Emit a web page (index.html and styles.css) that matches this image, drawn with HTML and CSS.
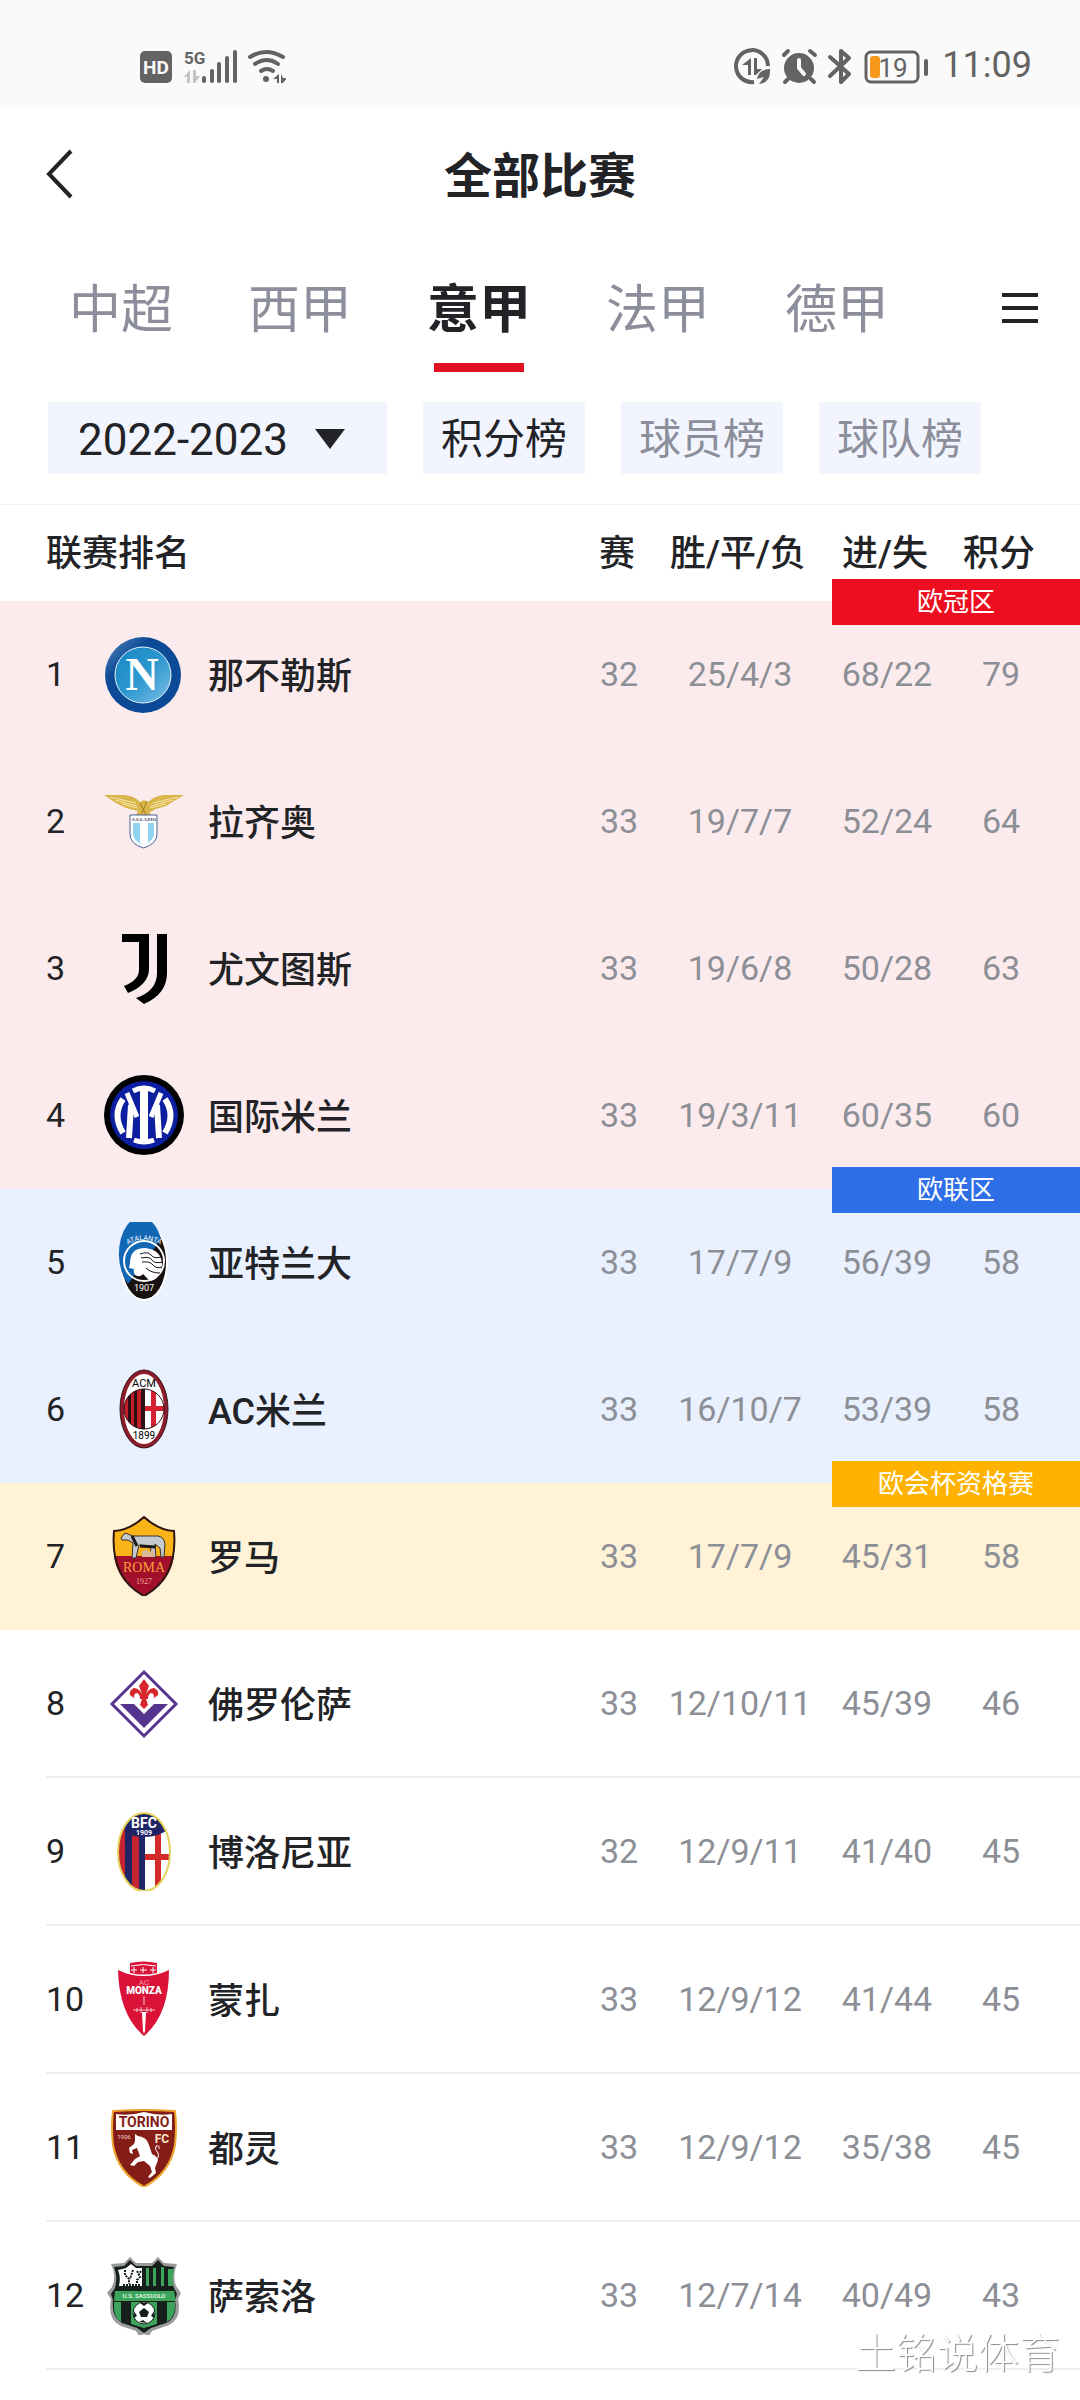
FILE: index.html
```html
<!DOCTYPE html>
<html lang="zh-CN">
<head>
    <meta charset="UTF-8">
    <meta name="viewport" content="width=device-width, initial-scale=1.0">
    <title>全部比赛</title>
    <link rel="stylesheet" href="styles.css">
</head>
<body>

    <!-- 状态栏 -->
    <div class="status">
        <svg class="status-left" width="146" height="40" viewBox="0 0 146 40" fill="#636363">
            <rect x="0" y="6" width="32" height="32" rx="5"/>
            <text x="16" y="29" font-size="19" font-weight="700" fill="#fafafa" text-anchor="middle">HD</text>
            <text x="44" y="19" font-size="17" font-weight="700">5G</text>
            <g fill="#c4c4c4"><path d="M50 25v13h-3V32h-3zM53 25h3v6h4l-5 7h-2z"/></g>
            <rect x="62" y="31" width="4" height="7" rx="2"/>
            <rect x="70" y="24" width="4" height="14" rx="2"/>
            <rect x="77" y="17" width="4" height="21" rx="2"/>
            <rect x="85" y="11" width="4" height="27" rx="2"/>
            <rect x="93" y="5" width="4" height="33" rx="2"/>
            <g fill="none" stroke="#636363" stroke-width="4" stroke-linecap="round">
                <path d="M110 12q16-10 33 0M115 19q12-8 23 0M121 26q6-4 12 0"/>
            </g>
            <circle cx="126" cy="34" r="3"/>
            <path d="M139 29v9h-2v-4h-4zM141 29l2 4h4l-4 5h-2z"/>
        </svg>
        <svg class="status-right" width="196" height="40" viewBox="0 0 196 40" fill="#636363">
            <g fill="none" stroke="#636363" stroke-width="4">
                <path d="M34 21A16 16 0 1 0 20 37"/>
            </g>
            <path d="M17 13v17h-3V20H8zM20 13h3v11h5l-6 6h-2zM23 34q2-10 13-10q1 14-11 15l5-7z"/>
            <circle cx="65" cy="23" r="15"/>
            <g fill="none" stroke="#636363" stroke-width="4" stroke-linecap="round">
                <path d="M50 10l4-4M76 6l5 4M54 34l-3 3M77 34l3 3"/>
            </g>
            <path d="M65 15v8l5 6" fill="none" stroke="#fafafa" stroke-width="4" stroke-linecap="round"/>
            <path d="M96 12l19 17l-8 8V6l8 7l-19 18" fill="none" stroke="#636363" stroke-width="4" stroke-linejoin="round" stroke-linecap="round"/>
            <rect x="132" y="7" width="52" height="30" rx="5" fill="none" stroke="#636363" stroke-width="3"/>
            <rect x="136" y="11" width="10" height="22" rx="3" fill="#f8981d"/>
            <text x="159" y="32" font-size="26" text-anchor="middle">19</text>
            <rect x="190" y="14" width="4" height="17" rx="2"/>
        </svg>
        <time class="clock">11:09</time>
    </div>

    <header class="header">
        <button class="back" type="button" aria-label="返回">
            <svg width="30" height="52" viewBox="0 0 30 52"><path d="M26 3L4 26L26 49" fill="none" stroke="#222326" stroke-width="4"/></svg>
        </button>
        <h1>全部比赛</h1>
    </header>

    <nav class="tabs">
        <a href="#">中超</a>
        <a href="#">西甲</a>
        <a href="#" class="active">意甲</a>
        <a href="#">法甲</a>
        <a href="#">德甲</a>
        <button class="menu" type="button" aria-label="更多联赛">
            <svg width="36" height="30" viewBox="0 0 36 30" fill="#222326"><path d="M0 0h36v4H0zM0 13h36v4H0zM0 26h36v4H0z"/></svg>
        </button>
    </nav>

    <div class="filters">
        <div class="season">
            <select aria-label="赛季">
                <option>2022-2023</option>
            </select>
            <svg class="arrow" width="30" height="20" viewBox="0 0 30 20"><path d="M0 0h30L15 20z" fill="#222326"/></svg>
        </div>
        <button type="button" class="active">积分榜</button>
        <button type="button">球员榜</button>
        <button type="button">球队榜</button>
    </div>

    <table class="standings">
        <colgroup>
            <col class="c-rank">
            <col class="c-logo">
            <col>
            <col class="c-played">
            <col class="c-record">
            <col class="c-goals">
            <col class="c-points">
        </colgroup>
        <thead>
            <tr>
                <th colspan="3" class="rank">联赛排名</th>
                <th>赛</th>
                <th>胜/平/负</th>
                <th>进/失</th>
                <th class="points">积分</th>
            </tr>
        </thead>
        <tbody>
            <!-- 欧冠区 -->
            <tr class="ucl">
                <td class="rank">1</td>
                <td class="logo">
                    <svg viewBox="0 0 80 80">
                        <defs>
                            <linearGradient id="nap" x1="0" y1="0" x2="1" y2="1"><stop offset="0" stop-color="#5a8fc4"/><stop offset=".3" stop-color="#0d4a94"/><stop offset="1" stop-color="#0b4a9a"/></linearGradient>
                            <linearGradient id="nap2" x1="0" y1="0" x2="1" y2="1"><stop offset="0" stop-color="#1787c4"/><stop offset=".5" stop-color="#2d97cf"/><stop offset="1" stop-color="#7fc0e6"/></linearGradient>
                        </defs>
                        <circle cx="39" cy="41" r="38" fill="url(#nap)"/>
                        <circle cx="39" cy="41" r="28" fill="url(#nap2)" stroke="#e6f4fb"/>
                        <text x="38" y="56" class="serif" font-size="46" font-weight="700" fill="#fff" text-anchor="middle">N</text>
                    </svg>
                </td>
                <td class="team">那不勒斯</td>
                <td>32</td>
                <td>25/4/3</td>
                <td>68/22</td>
                <td class="points"><span class="zone">欧冠区</span>79</td>
            </tr>
            <tr class="ucl">
                <td class="rank">2</td>
                <td class="logo">
                    <svg viewBox="0 0 80 80">
                        <path d="M0 14L20 14Q31 15 36 21L40 19L44 21Q50 15 60 14L80 14L70 20L62 25L52 28L46 31L47 35H32L34 30L22 27L12 22z" fill="#d9b64c"/>
                        <path d="M6 16l26 6M11 19l22 6M18 23l16 4M74 16l-25 6M69 19l-22 6M62 23l-16 4" stroke="#f7e7a8" fill="none"/>
                        <path d="M36 22l6 12M43 20l-5 12" stroke="#a37a1e" fill="none"/>
                        <path d="M26 34h27v19q0 10-13.500 14Q26 63 26 53z" fill="#fff" stroke="#48608f"/>
                        <path d="M29 42h21v11q0 7-10.500 11Q29 60 29 53z" fill="#8fd3ee"/>
                        <path d="M36 42h8v20l-4 2l-4-2z" fill="#fff"/>
                        <text x="40" y="40" class="serif" font-size="5" font-weight="700" fill="#33415f" text-anchor="middle">S.S.LAZIO</text>
                    </svg>
                </td>
                <td class="team">拉齐奥</td>
                <td>33</td>
                <td>19/7/7</td>
                <td>52/24</td>
                <td class="points">64</td>
            </tr>
            <tr class="ucl">
                <td class="rank">3</td>
                <td class="logo">
                    <svg viewBox="0 0 80 80">
                        <path d="M18 6H45V42Q44 57 24 65L20 58Q35 52 35 42V14H18z"/>
                        <path d="M53 6H63V45Q63 66 40 76L32 70Q53 63 53 45z"/>
                    </svg>
                </td>
                <td class="team">尤文图斯</td>
                <td>33</td>
                <td>19/6/8</td>
                <td>50/28</td>
                <td class="points">63</td>
            </tr>
            <tr class="ucl">
                <td class="rank">4</td>
                <td class="logo">
                    <svg viewBox="0 0 80 80">
                        <circle cx="40" cy="40" r="40"/>
                        <circle cx="40" cy="40" r="34" fill="#0b1fa0"/>
                        <g fill="none" stroke="#fff">
                            <path d="M29 16Q40 10 51 16M30 65Q40 69 50 65" stroke-width="5"/>
                            <path d="M40 14V66" stroke-width="8"/>
                            <path d="M27 30L25 63M53 30L55 63" stroke-width="6"/>
                            <path d="M23 18L33 42M57 18L47 42" stroke-width="5"/>
                            <path d="M19 24Q8 40 19 58M61 24Q72 40 61 58" stroke-width="6"/>
                        </g>
                    </svg>
                </td>
                <td class="team">国际米兰</td>
                <td>33</td>
                <td>19/3/11</td>
                <td>60/35</td>
                <td class="points">60</td>
            </tr>
            <!-- 欧联区 -->
            <tr class="uel">
                <td class="rank">5</td>
                <td class="logo">
                    <svg viewBox="0 0 80 80">
                        <defs>
                            <path id="ata-arc" d="M20 25Q40 11 60 25"/>
                        </defs>
                        <ellipse cx="40" cy="40" rx="24" ry="39" fill="#fff"/>
                        <ellipse cx="40" cy="40" rx="22" ry="37" fill="#19110f"/>
                        <path d="M57 17A22 37 0 1 0 24 62z" fill="#1267b5"/>
                        <circle cx="40" cy="39" r="20" fill="none" stroke="#fff" stroke-width="2"/>
                        <path d="M26 41Q26 26 41 26Q58 28 58 43Q56 58 46 59L39 52Q36 56 31 53Q29 49 30 47L25 46z" fill="#fff"/>
                        <path d="M36 32q8-3 11 1t10 2M37 36q9-2 11 2t11 2M38 40q8-1 11 3t9 2M42 46q5 5 14 5" fill="none" stroke="#19110f"/>
                        <text font-size="7" fill="#fff"><textPath href="#ata-arc" startOffset="50%" text-anchor="middle">ATALANTA</textPath></text>
                        <text x="40" y="69" font-size="9" fill="#fff" text-anchor="middle">1907</text>
                    </svg>
                </td>
                <td class="team">亚特兰大</td>
                <td>33</td>
                <td>17/7/9</td>
                <td>56/39</td>
                <td class="points"><span class="zone">欧联区</span>58</td>
            </tr>
            <tr class="uel">
                <td class="rank">6</td>
                <td class="logo">
                    <svg viewBox="0 0 80 80">
                        <defs>
                            <clipPath id="mil"><circle cx="40" cy="40" r="20"/></clipPath>
                        </defs>
                        <ellipse cx="40" cy="40" rx="22" ry="37" fill="#fff" stroke="#8c1d2c" stroke-width="4"/>
                        <ellipse cx="40" cy="40" rx="24" ry="39" fill="none" stroke="#3a1418"/>
                        <g clip-path="url(#mil)">
                            <path d="M20 20h21v41H20z" fill="#c21f2c"/>
                            <path d="M24 20h3v41h-3zM30 20h3v41h-3zM37 20h4v41h-4z" fill="#2c1013"/>
                            <path d="M41 20h20v41H41z" fill="#fff"/>
                            <path d="M47 20h5v17h9v5h-9v19h-5V42h-6v-5h6z" fill="#d32230"/>
                        </g>
                        <circle cx="40" cy="40" r="20" fill="none" stroke="#2c1013"/>
                        <text x="40" y="18" font-size="11" text-anchor="middle">ACM</text>
                        <text x="40" y="70" font-size="10" text-anchor="middle">1899</text>
                    </svg>
                </td>
                <td class="team">AC米兰</td>
                <td>33</td>
                <td>16/10/7</td>
                <td>53/39</td>
                <td class="points">58</td>
            </tr>
            <!-- 欧会杯资格赛 -->
            <tr class="uecl">
                <td class="rank">7</td>
                <td class="logo">
                    <svg viewBox="0 0 80 80">
                        <path d="M40 1Q54 14 70 15Q74 62 40 80Q6 62 10 15Q26 14 40 1z" fill="#fbb417"/>
                        <path d="M10 40H70Q66 67 40 80Q14 67 10 40z" fill="#a20f2a"/>
                        <path d="M40 1Q54 14 70 15Q74 62 40 80Q6 62 10 15Q26 14 40 1z" fill="none" stroke="#2c1712" stroke-width="2"/>
                        <path d="M17 22l4-5l8 3h25q6 1 7 8l-1 13h-3l-1-9l-5-4l1 13h-4l-2-11l-11-1l-3 13h-4l1-15l-5-3h-6z" fill="#c6c9d0" stroke="#35302c" stroke-width="1"/>
                        <path d="M28 20l5 10M36 30l16 1" stroke="#1d1a1a" stroke-width="3"/>
                        <path d="M38 41v-5l4-3l3 3l5-2l1 7z" fill="#d8b898"/>
                        <text x="40" y="56" class="serif" font-size="14" fill="#f9a13a" text-anchor="middle">ROMA</text>
                        <text x="40" y="68" class="serif" font-size="8" fill="#f0a59a" text-anchor="middle">1927</text>
                    </svg>
                </td>
                <td class="team">罗马</td>
                <td>33</td>
                <td>17/7/9</td>
                <td>45/31</td>
                <td class="points"><span class="zone">欧会杯资格赛</span>58</td>
            </tr>
            <tr>
                <td class="rank">8</td>
                <td class="logo">
                    <svg viewBox="0 0 80 80">
                        <path d="M40 9L72 41L40 73L8 41z" fill="#fff" stroke="#55348f" stroke-width="3"/>
                        <path d="M16 41H30L40 51L50 41H64L40 65z" fill="#55348f"/>
                        <path d="M40 16l5 7l-3 8q3-6 8-6q5 2 4 7l-4 3q0-5-3-5q-3 1-3 6h-2l2 6l-4 4l-4-4l2-6h-2q0-5-3-6q-3 0-3 5l-4-3q-1-5 4-7q5 0 8 6l-3-8z" fill="#d8262c"/>
                    </svg>
                </td>
                <td class="team">佛罗伦萨</td>
                <td>33</td>
                <td>12/10/11</td>
                <td>45/39</td>
                <td class="points">46</td>
            </tr>
            <tr>
                <td class="rank">9</td>
                <td class="logo">
                    <svg viewBox="0 0 80 80">
                        <defs>
                            <clipPath id="bol"><ellipse cx="40" cy="41" rx="26" ry="39"/></clipPath>
                        </defs>
                        <g clip-path="url(#bol)">
                            <path d="M13 0h28v82H13z" fill="#c4242f"/>
                            <path d="M21 0h7v82h-7zM35 0h6v82h-6z" fill="#1f2466"/>
                            <path d="M41 0h27v82H41z" fill="#fff"/>
                            <path d="M51 20h6v23h11v6H57v33h-6V49H41v-6h10z" fill="#d42a2c"/>
                            <path d="M13 0h54v16Q56 26 40 26T20 17z" fill="#1f2466"/>
                        </g>
                        <ellipse cx="40" cy="41" rx="26" ry="39" fill="none" stroke="#e2d45a" stroke-width="2"/>
                        <text x="40" y="17" font-size="14" font-weight="700" fill="#fff" text-anchor="middle">BFC</text>
                        <text x="40" y="24" font-size="7" font-weight="700" fill="#fff" text-anchor="middle">1909</text>
                    </svg>
                </td>
                <td class="team">博洛尼亚</td>
                <td>32</td>
                <td>12/9/11</td>
                <td>41/40</td>
                <td class="points">45</td>
            </tr>
            <tr>
                <td class="rank">10</td>
                <td class="logo">
                    <svg viewBox="0 0 80 80">
                        <path d="M14 11Q26 17 39.500 17T65 11Q65 56 40 77Q15 56 14 11z" fill="#da1238"/>
                        <path d="M26 4Q39 1 53 4V14Q39 17 26 14z" fill="#da1238"/>
                        <path d="M27 7q12-3 25 0M30 8v6M27 11h6M39 8v6M36 11h7M49 8v6M46 11h6" stroke="#fff" fill="none"/>
                        <text x="40" y="26" font-size="8" fill="#f59aa8" text-anchor="middle">AC</text>
                        <text x="40" y="35" font-size="10" font-weight="900" fill="#fff" text-anchor="middle">MONZA</text>
                        <path d="M40 37v9M29 51h22M37 48v6M43 48v6M33 49v4M47 49v4" stroke="#f6c3cc"/>
                        <path d="M38 53h4l-1 19l-1 3l-1-3z" fill="#fff"/>
                    </svg>
                </td>
                <td class="team">蒙扎</td>
                <td>33</td>
                <td>12/9/12</td>
                <td>41/44</td>
                <td class="points">45</td>
            </tr>
            <tr>
                <td class="rank">11</td>
                <td class="logo">
                    <svg viewBox="0 0 80 80">
                        <path d="M9 4Q40 2 71 4Q73 20 71 38Q66 66 40 80Q14 66 9 38Q7 20 9 4z" fill="#841d18" stroke="#eda62e" stroke-width="2"/>
                        <path d="M12 7q14 2 28-2q14 4 28 2v16H12z" fill="#fff"/>
                        <text x="40" y="20" font-size="14" font-weight="700" fill="#841d18" text-anchor="middle">TORINO</text>
                        <text x="20" y="32" font-size="6" fill="#f0d6cf" text-anchor="middle">1906</text>
                        <text x="58" y="36" font-size="12" font-weight="700" fill="#fbe3c5" text-anchor="middle">FC</text>
                        <path d="M31 27l3 2q9 1 11 9l3 9q5 2 6 6l-3 8l1 5l-6 5l-2-1l4-5l-2-6l-6-5l-6 1l-4 4l-4-1l5-6l5-3l-3-8l-5 2l1 4l-3-1l-1-5l5-4l1-3z" fill="#fff"/>
                        <path d="M50 51q6 2 4-5q-4-4-2-7q4-1 3 3" fill="none" stroke="#fff"/>
                    </svg>
                </td>
                <td class="team">都灵</td>
                <td>33</td>
                <td>12/9/12</td>
                <td>35/38</td>
                <td class="points">45</td>
            </tr>
            <tr>
                <td class="rank">12</td>
                <td class="logo">
                    <svg viewBox="0 0 80 80">
                        <path d="M26 2l6 6h16l6-6l6 6l13 1q-5 12-1 22l5 7l-3 6q4 20-9 26l-17 6l-3 5l-5-2l-5 2l-3-5l-15-5Q3 65 7 44l-4-6l5-6q5-12-1-23l13-1z" fill="#9b9b9b"/>
                        <path d="M26 5l6 6h16l6-6l6 6l10 1q-4 10 0 21l3 6l-2 6q3 18-9 23l-15 5l-7 5l-7-5l-15-5Q7 61 9 45l-2-6l4-6q3-11-1-21l10-1z" fill="#15201b"/>
                        <path d="M27 9l5 4h6v18H15q2-9-1-16l8-2z" fill="#fff"/>
                        <path d="M42 13h3v18h-3zM49 13h3v18h-3zM57 12h3v19h-3zM64 14h6q-2 9-1 17h-5z" fill="#3da45c"/>
                        <path d="M11 36H70l2 10H10z" fill="#3da45c"/>
                        <path d="M10 47h7v20q-8-5-7-20zM27 47h26v22l-13 4l-13-4zM63 47h8q1 15-8 20z" fill="#3da45c"/>
                        <circle cx="40" cy="58" r="11" fill="#fff" stroke="#15201b"/>
                        <path d="M40 53l5 4l-2 5h-6l-2-5zM36 48h8l-4 3zM30 56l3 5l-3 2zM50 56l-3 5l3 2zM35 67l4-2l4 3z" fill="#15201b"/>
                        <path d="M21 15v5l4 4v5M29 15l-3 9M33 16l3 6l-3 3v4M37 16l-3 5M19 30h18" fill="none" stroke="#15201b" stroke-width="2" stroke-dasharray="2 1"/>
                        <text x="40" y="43" font-size="6" font-weight="700" fill="#d9f5df" text-anchor="middle">U.S. SASSUOLO</text>
                    </svg>
                </td>
                <td class="team">萨索洛</td>
                <td>33</td>
                <td>12/7/14</td>
                <td>40/49</td>
                <td class="points">43</td>
            </tr>
        </tbody>
    </table>

    <div class="watermark">土铭说体育</div>

</body>
</html>
```
FILE: styles.css
```css
* {
    box-sizing: border-box;
}
body {
    margin: 0;
    min-height: 100vh;
    background-color: #fff;
    color: #222326;
    font-family: Roboto, "Noto Sans CJK SC", sans-serif;
}
svg {
    display: block;
}
button {
    border: none;
    padding: 0;
    background: none;
    color: inherit;
    font-family: inherit;
    cursor: pointer;
}
a {
    color: inherit;
    text-decoration: none;
}
.serif {
    font-family: "Liberation Serif", serif;
}

/* 状态栏 */
.status {
    display: flex;
    align-items: center;
    height: 107px;
    padding: 22px 48px 0 140px;
    background-color: #fafafa;
    color: #636363;
}
.status-right {
    margin-left: auto;
}
.clock {
    margin-left: 12px;
    font-size: 36px;
    line-height: 40px;
}

/* 标题 */
.header {
    position: relative;
    display: flex;
    align-items: center;
    justify-content: center;
    height: 136px;
}
.back {
    position: absolute;
    left: 45px;
    top: 41px;
}
h1 {
    margin: 0;
    padding-top: 4px;
    font-size: 48px;
    line-height: 72px;
    font-weight: 700;
}

/* 联赛切换 */
.tabs {
    display: flex;
    align-items: center;
    gap: 75px;
    padding: 0 42px 0 69px;
    font-size: 52px;
    line-height: 123px;
    color: #8c8f9b;
}
.tabs a {
    padding-top: 6px;
}
.tabs .active {
    position: relative;
    color: #222326;
    font-weight: 700;
}
.tabs .active::after {
    content: "";
    position: absolute;
    left: 7px;
    right: 7px;
    bottom: 0;
    height: 9px;
    background-color: #e01222;
}
.menu {
    margin-left: auto;
    color: #222326;
}

/* 筛选 */
.filters {
    display: flex;
    gap: 36px;
    padding: 30px 48px;
    border-bottom: 1px solid #efefef;
}
.filters button,
.season {
    height: 72px;
    background-color: #f2f5fe;
}
.filters button {
    padding: 4px 18px 0;
    font-size: 42px;
    line-height: 68px;
    color: #8c8f9b;
}
.filters .active {
    color: #222326;
}
.season {
    position: relative;
    width: 339px;
}
.season select {
    width: 100%;
    height: 72px;
    padding: 4px 30px 0;
    border: none;
    background: none;
    appearance: none;
    color: #222326;
    font-family: inherit;
    font-size: 44px;
}
.arrow {
    position: absolute;
    right: 42px;
    top: 27px;
    pointer-events: none;
}

/* 积分榜 */
.standings {
    width: 100%;
    border-collapse: collapse;
    table-layout: fixed;
}
.c-rank {
    width: 104px;
}
.c-logo {
    width: 104px;
}
.c-played {
    width: 70px;
}
.c-record {
    width: 172px;
}
.c-goals {
    width: 122px;
}
.c-points {
    width: 132px;
}
th {
    height: 96px;
    padding: 0 4px 6px 0;
    font-size: 36px;
    font-weight: 500;
    white-space: nowrap;
}
td {
    position: relative;
    height: 148px;
    padding: 0 0 2px;
    font-size: 34px;
    text-align: center;
    color: #8c8f96;
    white-space: nowrap;
}
.rank {
    padding-left: 46px;
    text-align: left;
    color: #222326;
}
.team {
    padding-bottom: 4px;
    font-size: 36px;
    font-weight: 500;
    text-align: left;
    color: #222326;
}
td.points {
    padding-right: 26px;
}
th.points {
    padding-right: 30px;
}
.logo svg {
    width: 80px;
    height: 80px;
}
tbody tr {
    background: linear-gradient(#f0f0f0, #f0f0f0) 46px 100% / 100% 2px no-repeat;
}
.ucl td,
.uel td,
.uecl td {
    height: 147px;
}
.ucl {
    background: #fcebed;
}
.uel {
    background: #e9f0fe;
}
.uecl {
    background: #fff2d7;
}

/* 区域标签压在分界线上 */
.zone {
    position: absolute;
    z-index: 1;
    right: 0;
    top: -22px;
    width: 248px;
    height: 46px;
    font-size: 26px;
    line-height: 46px;
    color: #fff;
}
.ucl .zone {
    background-color: #ed0f20;
}
.uel .zone {
    background-color: #2e6ee6;
}
.uecl .zone {
    background-color: #ffb300;
}

.watermark {
    position: fixed;
    right: 20px;
    bottom: 16px;
    font-size: 41px;
    line-height: 60px;
    font-weight: 300;
    color: #fff;
    text-shadow: 1px 1px 1px #8a8a8a;
}
```
